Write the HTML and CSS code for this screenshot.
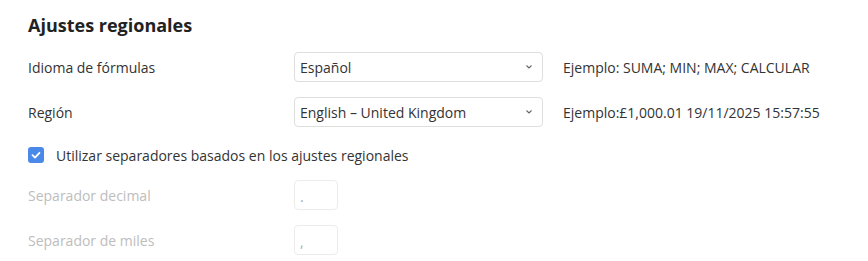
FILE: index.html
```html
<!DOCTYPE html>
<html lang="es">
<head>
    <meta charset="UTF-8" />
    <link rel="stylesheet" href="styles.css">
    <title>Ajustes regionales</title>
</head>
<body>
    <div class="settings">
        <h2 class="title">Ajustes regionales</h2>

        <div class="row">
            <div class="label">Idioma de fórmulas</div>
            <div class="select">
                <span>Español</span>
                <svg class="caret" width="10" height="6" viewBox="0 0 10 6"><path d="M2.5 1.5 L5 4 L7.5 1.5" fill="none" stroke="#666" stroke-width="1.1"/></svg>
            </div>
            <div class="example">Ejemplo: SUMA; MIN; MAX; CALCULAR</div>
        </div>

        <div class="row">
            <div class="label">Región</div>
            <div class="select">
                <span>English – United Kingdom</span>
                <svg class="caret" width="10" height="6" viewBox="0 0 10 6"><path d="M2.5 1.5 L5 4 L7.5 1.5" fill="none" stroke="#666" stroke-width="1.1"/></svg>
            </div>
            <div class="example">Ejemplo:£1,000.01 19/11/2025 15:57:55</div>
        </div>

        <div class="check-row">
            <span class="checkbox">
                <svg width="16" height="16" viewBox="0 0 16 16"><path d="M4.5 8.2 L7 10.6 L11.5 5.8" fill="none" stroke="#fff" stroke-width="1.8" stroke-linecap="round" stroke-linejoin="round"/></svg>
            </span>
            <span>Utilizar separadores basados en los ajustes regionales</span>
        </div>

        <div class="row">
            <div class="label disabled">Separador decimal</div>
            <div class="small-input">.</div>
        </div>

        <div class="row">
            <div class="label disabled">Separador de miles</div>
            <div class="small-input">,</div>
        </div>
    </div>
</body>
</html>
```

FILE: styles.css
```css
* {
    box-sizing: border-box;
}

body {
    margin: 0;
    font-family: "Open Sans", "Noto Sans", sans-serif;
    font-size: 14px;
    color: #333;
    background-color: #fff;
}

.settings {
    display: flex;
    flex-direction: column;
    padding: 10px 28px 0 28px;
}

.title {
    margin: 0 0 12px 0;
    font-size: 18px;
    font-weight: 700;
    color: #222;
    height: 30px;
    line-height: 30px;
}

.row {
    display: flex;
    align-items: center;
    height: 30px;
    margin-bottom: 15px;
}

.label {
    width: 266px;
    flex-shrink: 0;
}

.label.disabled {
    color: #bdbdbd;
}

.select {
    width: 249px;
    height: 30px;
    border: 1px solid #dedede;
    border-radius: 4px;
    display: flex;
    align-items: center;
    justify-content: space-between;
    padding: 0 8px 0 5px;
}

.caret {
    display: block;
}

.example {
    margin-left: 20px;
}

.check-row {
    display: flex;
    align-items: center;
    gap: 12px;
    height: 16px;
    margin-top: 5px;
    margin-bottom: 17px;
}

.checkbox {
    width: 16px;
    height: 16px;
    border-radius: 3px;
    background-color: #4a89e8;
    display: flex;
}

.small-input {
    width: 44px;
    height: 30px;
    border: 1px solid #ececec;
    border-radius: 4px;
    padding: 2px 5px 0;
    color: #aaa;
    display: flex;
    align-items: center;
}
```
